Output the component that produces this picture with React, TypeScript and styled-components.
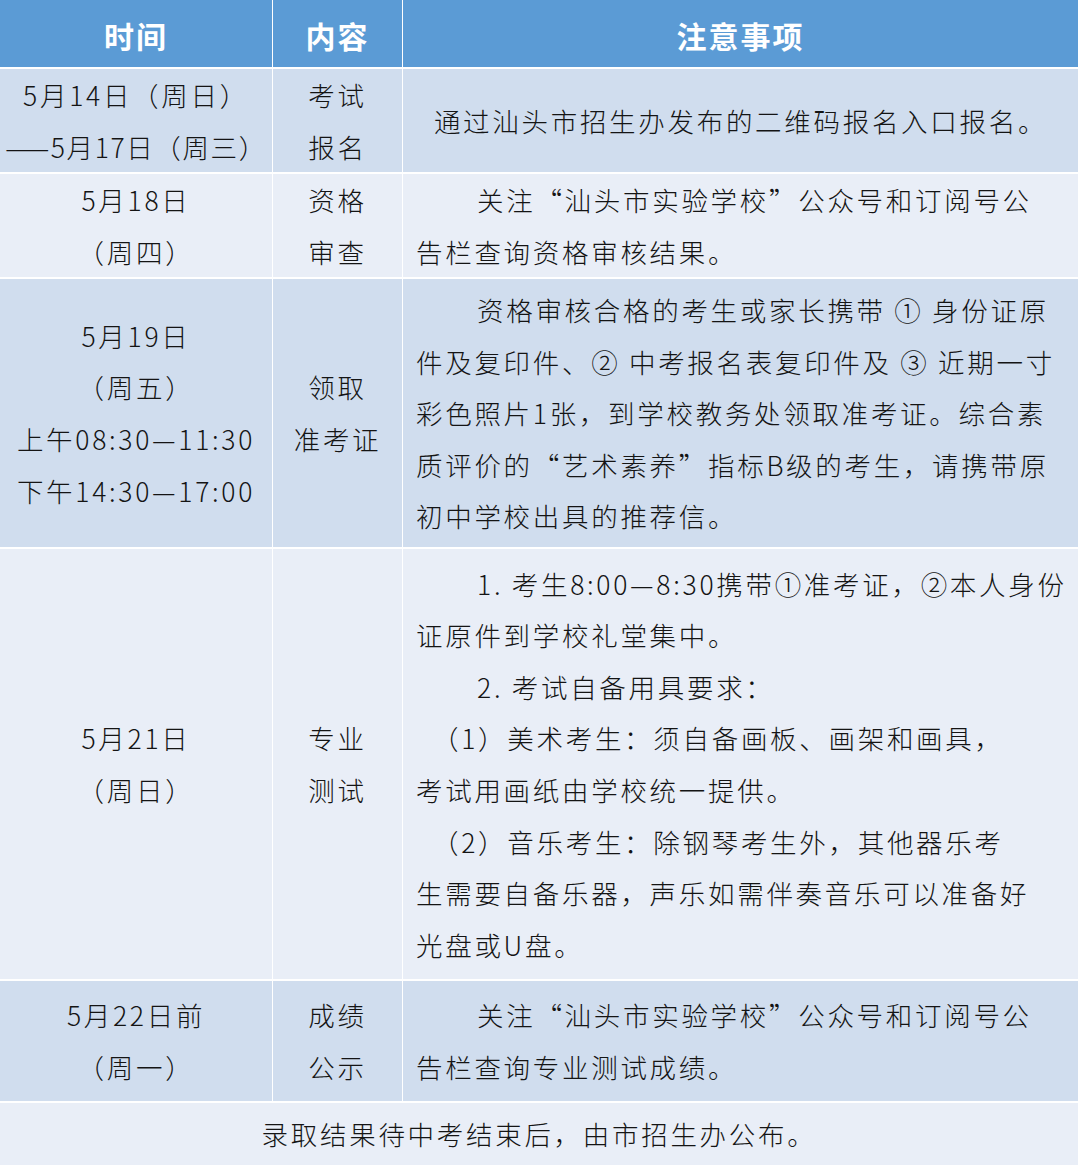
import React from "react";
import styled, { createGlobalStyle } from "styled-components";

const Global = createGlobalStyle`
  html, body { margin: 0; padding: 0; background: #ffffff; }
  body { font-family: "Noto Sans CJK SC", "Noto Sans", sans-serif; }
`;

const Table = styled.div`
  width: 1078px;
  display: grid;
  grid-template-columns: 272px 129px 675px;
  grid-template-rows: 67px 103px 103px 268px 430px 120px 62px;
  column-gap: 1px;
  row-gap: 2px;
  background: #ffffff;
`;

const HeadCell = styled.div`
  background: #5b9bd5;
  color: #ffffff;
  font-weight: 700;
  font-size: 30px;
  letter-spacing: 2px;
  display: flex;
  align-items: center;
  justify-content: center;
  padding-top: 2px;
  box-sizing: border-box;
`;

const Cell = styled.div<{ $tone: "dark" | "light"; $span?: boolean; $text?: boolean }>`
  background: ${(p) => (p.$tone === "dark" ? "#d0ddee" : "#e9eef7")};
  grid-column: ${(p) => (p.$span ? "1 / -1" : "auto")};
  display: flex;
  flex-direction: column;
  justify-content: center;
  align-items: ${(p) => (p.$text ? "flex-start" : "center")};
  padding: ${(p) => (p.$text ? "0 0 0 13px" : "0")};
  box-sizing: border-box;
  color: #141414;
  font-size: 26.5px;
  font-weight: 300;
  letter-spacing: 2.7px;
  line-height: 51.6px;
  overflow: visible;
`;

const Line = styled.div<{ $indent?: "full" | "half" }>`
  white-space: nowrap;
  text-indent: ${(p) => (p.$indent === "full" ? "61px" : p.$indent === "half" ? "16px" : "0")};
`;

const CenterLine = styled.div<{ $tight?: boolean }>`
  white-space: nowrap;
  text-align: center;
  letter-spacing: ${(p) => (p.$tight ? "1.6px" : "inherit")};
`;

type TextLine = { t: string; i?: "full" | "half" };
type Row = { tone: "dark" | "light"; time: string[]; item: string[]; note: TextLine[]; centerNote?: boolean };

const rows: Row[] = [
  {
    tone: "dark",
    time: ["5月14日（周日）", "——5月17日（周三）"],
    item: ["考试", "报名"],
    note: [{ t: "通过汕头市招生办发布的二维码报名入口报名。" }],
    centerNote: true,
  },
  {
    tone: "light",
    time: ["5月18日", "（周四）"],
    item: ["资格", "审查"],
    note: [
      { t: "关注“汕头市实验学校”公众号和订阅号公", i: "full" },
      { t: "告栏查询资格审核结果。" },
    ],
  },
  {
    tone: "dark",
    time: ["5月19日", "（周五）", "上午08:30—11:30", "下午14:30—17:00"],
    item: ["领取", "准考证"],
    note: [
      { t: "资格审核合格的考生或家长携带 ① 身份证原", i: "full" },
      { t: "件及复印件、② 中考报名表复印件及 ③ 近期一寸" },
      { t: "彩色照片1张，到学校教务处领取准考证。综合素" },
      { t: "质评价的“艺术素养”指标B级的考生，请携带原" },
      { t: "初中学校出具的推荐信。" },
    ],
  },
  {
    tone: "light",
    time: ["5月21日", "（周日）"],
    item: ["专业", "测试"],
    note: [
      { t: "1. 考生8:00—8:30携带①准考证，②本人身份", i: "full" },
      { t: "证原件到学校礼堂集中。" },
      { t: "2. 考试自备用具要求：", i: "full" },
      { t: "（1）美术考生：须自备画板、画架和画具，", i: "half" },
      { t: "考试用画纸由学校统一提供。" },
      { t: "（2）音乐考生：除钢琴考生外，其他器乐考", i: "half" },
      { t: "生需要自备乐器，声乐如需伴奏音乐可以准备好" },
      { t: "光盘或U盘。" },
    ],
  },
  {
    tone: "dark",
    time: ["5月22日前", "（周一）"],
    item: ["成绩", "公示"],
    note: [
      { t: "关注“汕头市实验学校”公众号和订阅号公", i: "full" },
      { t: "告栏查询专业测试成绩。" },
    ],
  },
];

export default function App() {
  return (
    <>
      <Global />
      <Table>
        <HeadCell>时间</HeadCell>
        <HeadCell>内容</HeadCell>
        <HeadCell>注意事项</HeadCell>
        {rows.map((r, idx) => (
          <React.Fragment key={idx}>
            <Cell $tone={r.tone}>
              {r.time.map((l) => (
                <CenterLine key={l} $tight={l.startsWith("——")}>
                  {l}
                </CenterLine>
              ))}
            </Cell>
            <Cell $tone={r.tone}>
              {r.item.map((l) => (
                <CenterLine key={l}>{l}</CenterLine>
              ))}
            </Cell>
            <Cell $tone={r.tone} $text={!r.centerNote}>
              {r.note.map((l, k) =>
                r.centerNote ? (
                  <CenterLine key={k}>{l.t}</CenterLine>
                ) : (
                  <Line key={k} $indent={l.i}>
                    {l.t}
                  </Line>
                )
              )}
            </Cell>
          </React.Fragment>
        ))}
        <Cell $tone="light" $span>
          <CenterLine>录取结果待中考结束后，由市招生办公布。</CenterLine>
        </Cell>
      </Table>
    </>
  );
}
